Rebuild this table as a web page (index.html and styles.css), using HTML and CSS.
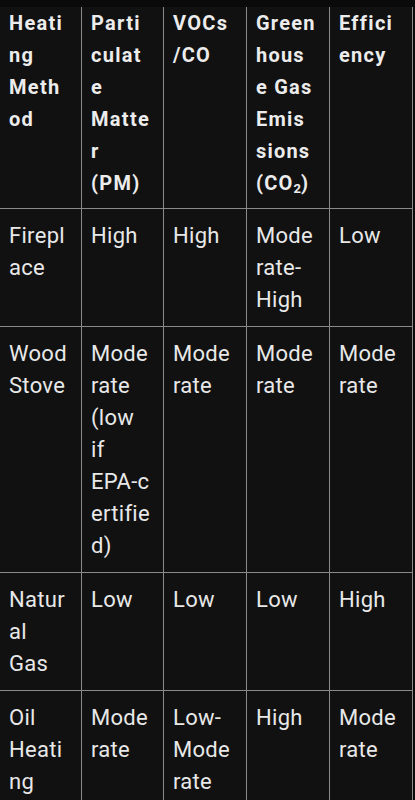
FILE: index.html
```html
<!DOCTYPE html>
<html>
<head>
<meta charset="utf-8">
<link rel="stylesheet" href="styles.css">
</head>
<body>
<div class="wrap">
<table class="grid">
<colgroup>
<col class="c1"><col class="c2"><col class="c3"><col class="c4"><col class="c5">
</colgroup>
<thead>
<tr>
<th>Heating Method</th>
<th>Particulate Matter (PM)</th>
<th>VOCs/CO</th>
<th class="narrow">Greenhouse Gas Emissions (CO<sub>2</sub>)</th>
<th>Efficiency</th>
</tr>
</thead>
<tbody>
<tr><td>Fireplace</td><td>High</td><td>High</td><td>Moderate-High</td><td>Low</td></tr>
<tr><td>Wood Stove</td><td>Moderate (low if EPA-c<br>ertified)</td><td>Moderate</td><td>Moderate</td><td>Moderate</td></tr>
<tr><td>Natural Gas</td><td>Low</td><td>Low</td><td>Low</td><td>High</td></tr>
<tr><td>Oil Heating</td><td>Moderate</td><td>Low-Moderate</td><td>High</td><td>Moderate</td></tr>
</tbody>
</table>
</div>
</body>
</html>
```

FILE: styles.css
```css
html, body {
  margin: 0;
  padding: 0;
  background: #0a0a0a;
}
.wrap {
  padding-top: 7px;
  width: 415px;
  overflow: hidden;
}
.grid {
  border-collapse: separate;
  border-spacing: 0;
  table-layout: fixed;
  width: 413px;
  background: #111111;
  font-family: Roboto, "Noto Sans", sans-serif;
  color: #e8e8e8;
}
.c1 { width: 82px; }
.c2 { width: 82px; }
.c3 { width: 83px; }
.c4 { width: 83px; }
.c5 { width: 83px; }
.grid th, .grid td {
  border-right: 1px solid #8a8a8a;
  border-bottom: 1px solid #8a8a8a;
  padding: 11px 12px 10px 9px;
  text-align: left;
  vertical-align: top;
  line-height: 32px;
  overflow-wrap: anywhere;
}
.grid th {
  font-size: 20px;
  font-weight: 700;
  letter-spacing: 1.3px;
  padding-top: 0;
  padding-bottom: 9px;
  padding-right: 11px;
  color: #ececec;
}
.grid th.narrow {
  padding-right: 13px;
  letter-spacing: 1.2px;
}
.grid td {
  font-size: 22px;
  font-weight: 400;
  letter-spacing: 0.3px;
}
.grid sub {
  font-size: 13px;
  line-height: 0;
  vertical-align: -3px;
  letter-spacing: 0;
}
```
